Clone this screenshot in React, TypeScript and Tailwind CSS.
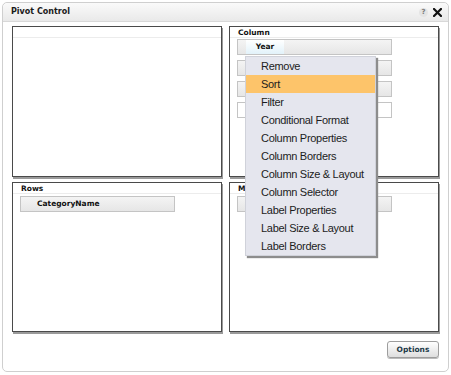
import React from 'react';

const menuItems = [
  'Remove',
  'Sort',
  'Filter',
  'Conditional Format',
  'Column Properties',
  'Column Borders',
  'Column Size & Layout',
  'Column Selector',
  'Label Properties',
  'Label Size & Layout',
  'Label Borders',
];

const verdana = { fontFamily: '"DejaVu Sans", Verdana, sans-serif' };

const Bar = ({ children }: { children?: React.ReactNode }) => (
  <div className="ml-[7px] h-[16px] w-[155px] border border-[#c4c4c4] bg-gradient-to-b from-[#f4f4f4] to-[#e6e6e6]">
    {children}
  </div>
);

const Panel = ({ title, children }: { title?: string; children?: React.ReactNode }) => (
  <div className="relative h-full border border-[#4a4a4a] bg-white shadow-[1px_2px_0_#9a9a9a]">
    <div className="h-[11px] border-b border-[#ececec] px-[8px] text-[7.5px] font-bold leading-[11px] text-[#111]" style={verdana}>
      {title}
    </div>
    {children}
  </div>
);

export default function App() {
  return (
    <div className="h-[375px] w-[451px] bg-white p-[2px] pb-[3px]">
      <div className="flex h-full flex-col rounded-[5px] border border-[#cfcfcf] bg-white">
        {/* Title bar */}
        <div className="flex h-[19px] items-center justify-between rounded-t-[5px] border-b border-[#d8d8d8] bg-gradient-to-b from-[#fafafa] to-[#e9e9e9] pl-[8px] pr-[6px]">
          <span className="text-[8px] font-bold text-[#1a1a1a]" style={verdana}>
            Pivot Control
          </span>
          <div className="flex items-center gap-[5px]">
            <span className="flex h-[9px] w-[9px] items-center justify-center rounded-full bg-[#e4e4e4] text-[7px] font-bold text-[#7a7a7a]" style={verdana}>?</span>
            <svg width="9" height="9" viewBox="0 0 9 9">
              <path d="M1 1 L8 8 M8 1 L1 8" stroke="#111" strokeWidth="2.2" strokeLinecap="square" />
            </svg>
          </div>
        </div>

        {/* Panels */}
        <div className="grid grid-cols-[210px_210px] grid-rows-[151px_150px] gap-x-[7px] gap-y-[5px] px-[9px] pt-[4px]">
          <Panel />
          <Panel title="Column">
            <div className="mt-[1px] flex flex-col gap-[5px]">
              <Bar>
                <div className="ml-[8px] h-full w-[38px] bg-gradient-to-b from-white to-[#e2f2fa] text-center text-[7.5px] font-bold leading-[14px] text-[#111]" style={verdana}>
                  Year
                </div>
              </Bar>
              <Bar />
              <Bar />
              <div className="ml-[7px] h-[16px] w-[155px] border border-[#c4c4c4] bg-white" />
            </div>

            {/* Context menu */}
            <div
              className="absolute left-[15px] top-[29px] z-10 w-[131px] border border-[#d0d2da] bg-[#e5e6ee] shadow-[2px_2px_1px_#8d8d8d]"
              style={{ fontFamily: '"Liberation Sans", Arial, sans-serif' }}
            >
              {menuItems.map((item) => (
                <div
                  key={item}
                  className={`h-[18px] whitespace-nowrap pl-[15px] text-[11px] leading-[18px] tracking-[-0.3px] text-[#1c1c1c] ${item === 'Sort' ? 'bg-[#fdc46a]' : ''}`}
                >
                  {item}
                </div>
              ))}
            </div>
          </Panel>
          <Panel title="Rows">
            <div className="mt-[2px]">
              <Bar>
                <div className="pl-[16px] text-[7.5px] font-bold leading-[14px] text-[#111]" style={verdana}>
                  CategoryName
                </div>
              </Bar>
            </div>
          </Panel>
          <Panel title="Measures">
            <div className="mt-[2px]">
              <Bar />
            </div>
          </Panel>
        </div>

        {/* Footer */}
        <div className="flex justify-end pr-[9px] pt-[9px]">
          <button
            className="h-[17px] w-[52px] rounded-[3px] border border-[#9d9d9d] bg-gradient-to-b from-white to-[#dedede] text-[7.5px] font-bold text-[#1d3a48] shadow-[0_1px_0_#bbb]"
            style={verdana}
          >
            Options
          </button>
        </div>
      </div>
    </div>
  );
}
